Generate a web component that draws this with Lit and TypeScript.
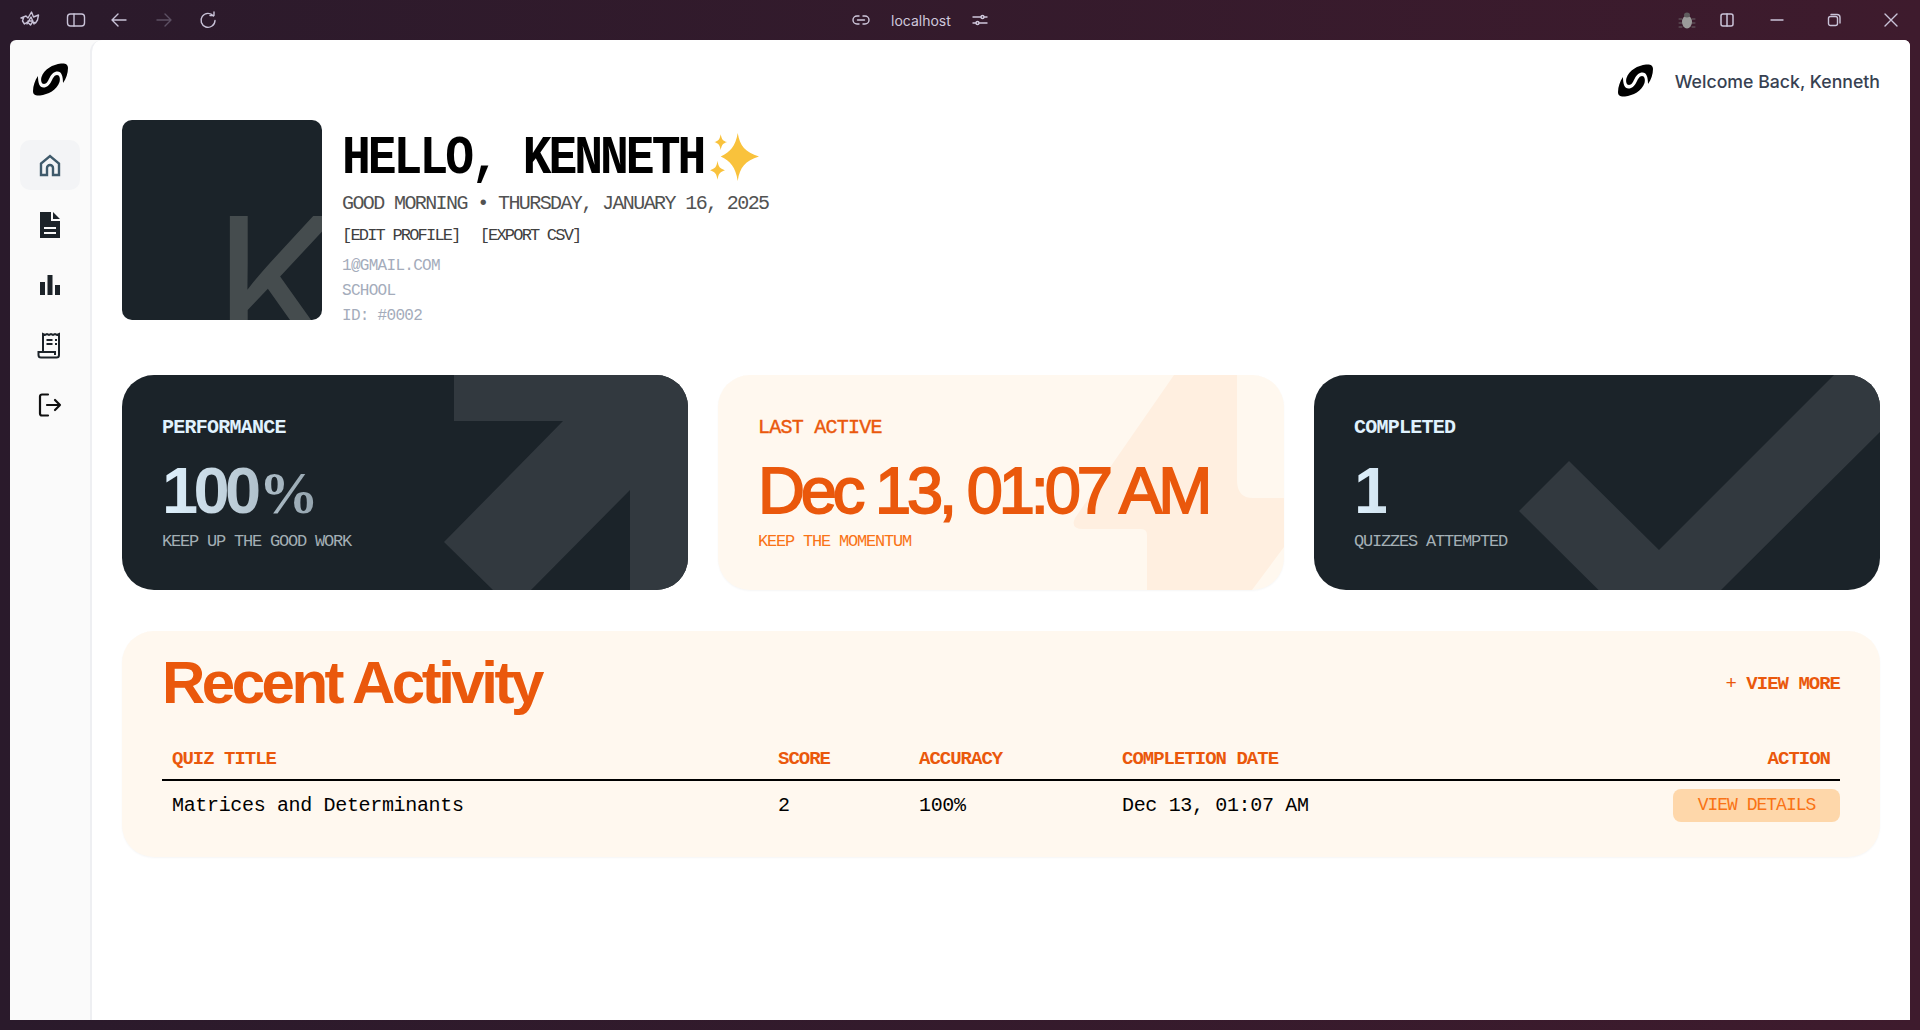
import { LitElement, html, css, svg } from 'lit';
import { customElement } from 'lit/decorators.js';

const hook = 'M30 20C33 16 35 10 35 5C35 1 32 0 28 .5C20 1.500 11 6 8.500 14C7.500 17.500 8.500 21 11 21C13.500 21 15 18 16.500 15C18.500 11 21 8.500 24.500 8.500C28.500 8.500 30 13 30 20Z';

const logo = html`<svg class="logo" viewBox="0 0 35 33">
  <path d=${hook}/>
  <path d=${hook} transform="rotate(180 17.500 16.500)"/>
</svg>`;

const arrowShape = svg`<polygon points="332,0 566,0 566,215 508,215 508,115 409,215 371,215 322,167 441,46 332,46"/>`;
const checkShape = svg`<polygon points="520,0 566,0 566,57 407,215 284.500,215 205,136 255,86 345,175"/>`;
const boltShape = svg`<path d="M456 0H519V105Q519 123 535 123H566V172L534 215H429V160Q429 154 423 154H365Q352 154 357 143Z"/>`;

@customElement('stat-card')
class StatCard extends LitElement {
  static properties = {
    label: { type: String },
    value: { type: String },
    note: { type: String },
    tone: { type: String },
  };

  label = '';
  value = '';
  note = '';
  tone = 'dark';

  static styles = css`
    :host {
      display: block;
    }
    .card {
      position: relative;
      height: 215px;
      box-sizing: border-box;
      padding: 41px 40px 0;
      border-radius: 32px;
      overflow: hidden;
      font-family: 'Liberation Mono', monospace;
    }
    .dark {
      background: #1b2329;
    }
    .light {
      background: #fff8ef;
      box-shadow: 0 1px 2px rgba(0, 0, 0, 0.04);
    }
    .shape {
      position: absolute;
      left: 0;
      top: 0;
      width: 100%;
      height: 100%;
    }
    .dark .shape {
      fill: #32393f;
    }
    .light .shape {
      fill: #ffefe0;
    }
    .label,
    .value,
    .note {
      position: relative;
    }
    .label {
      font-size: 20px;
      line-height: 24px;
      font-weight: 700;
      letter-spacing: -0.75px;
    }
    .dark .label {
      color: #e0f2fe;
    }
    .light .label {
      color: #ea580c;
      font-weight: 400;
      -webkit-text-stroke: 0.4px #ea580c;
    }
    .value {
      margin-top: 15px;
      font-family: 'Liberation Sans', sans-serif;
      font-size: 65px;
      line-height: 72px;
      letter-spacing: -4.6px;
      white-space: nowrap;
      width: fit-content;
    }
    .dark .value {
      font-weight: 700;
      background: linear-gradient(90deg, #e0f2fe, #94a3ad) no-repeat 0 0 / 155px 100%;
      -webkit-background-clip: text;
      background-clip: text;
      color: transparent;
    }
    .light .value {
      color: #ea580c;
      letter-spacing: -4.15px;
      -webkit-text-stroke: 1.8px #ea580c;
    }
    .pct {
      font-family: 'Liberation Serif', serif;
      font-size: 60px;
      line-height: 0;
      letter-spacing: 0;
      margin-left: 2px;
    }
    .note {
      margin-top: 5px;
      font-size: 17px;
      line-height: 20px;
      letter-spacing: -1.2px;
    }
    .dark .note {
      color: #a3afb5;
    }
    .light .note {
      color: #f97316;
    }
  `;

  render() {
    const shape = this.tone === 'light' ? boltShape : this.label === 'COMPLETED' ? checkShape : arrowShape;
    const parts = this.value.endsWith('%') ? [this.value.slice(0, -1), '%'] : [this.value, ''];
    return html`
      <div class="card ${this.tone}">
        <svg class="shape" viewBox="0 0 566 215">${shape}</svg>
        <div class="label">${this.label}</div>
        <div class="value">${parts[0]}${parts[1] ? html`<span class="pct">${parts[1]}</span>` : ''}</div>
        <div class="note">${this.note}</div>
      </div>
    `;
  }
}

@customElement('app-root')
class AppRoot extends LitElement {
  static styles = css`
    :host {
      display: block;
      width: 1920px;
      height: 1030px;
      overflow: hidden;
      background: linear-gradient(90deg, #2a1a2b, #3e1b2d);
      font-family: 'Inter', sans-serif;
    }
    /* browser chrome */
    .chrome {
      display: flex;
      align-items: center;
      height: 40px;
      color: #c9c3d8;
    }
    .chrome svg {
      fill: none;
      stroke: currentColor;
      stroke-width: 1.4;
      stroke-linecap: round;
      stroke-linejoin: round;
      flex: none;
    }
    .left {
      width: 852px;
      flex: none;
      box-sizing: border-box;
      display: flex;
      align-items: center;
      padding-left: 19px;
      gap: 25px;
    }
    .left .dim {
      color: #5c5063;
    }
    .left .back {
      margin-left: -2px;
    }
    .right {
      flex: 1;
      display: flex;
      align-items: center;
      justify-content: flex-end;
      padding-right: 22px;
    }
    .url {
      display: flex;
      align-items: center;
      gap: 21px;
      font-size: 14px;
      color: #cfc8dc;
    }
    .chrome .bug {
      margin-right: 24px;
      stroke: #777;
      stroke-width: 0.8;
    }
    .split {
      margin-right: 36px;
    }
    .min,
    .max {
      margin-right: 43px;
    }
    /* window */
    .window {
      display: flex;
      height: 980px;
      margin: 0 10px;
      background: #fafafa;
      border-radius: 6px 6px 0 0;
      overflow: hidden;
    }
    .side {
      width: 80px;
      flex: none;
      display: flex;
      flex-direction: column;
      align-items: center;
      box-sizing: border-box;
      padding-top: 23px;
    }
    .logo {
      width: 35px;
      height: 33px;
      fill: #000;
      display: block;
      flex: none;
    }
    .nav {
      display: flex;
      flex-direction: column;
      gap: 10px;
      margin-top: 44px;
    }
    .nav a {
      width: 60px;
      height: 50px;
      display: flex;
      align-items: center;
      justify-content: center;
      border-radius: 10px;
    }
    .nav a.active {
      background: #f3f4f6;
    }
    .main {
      flex: 1;
      background: #fff;
      border-left: 2px solid #eeeff2;
      border-top-left-radius: 12px;
      padding: 0 30px;
      box-sizing: border-box;
      min-width: 0;
    }
    .top {
      height: 80px;
      display: flex;
      align-items: center;
      justify-content: flex-end;
      gap: 22px;
      font-size: 17.7px;
      font-weight: 500;
      color: #374151;
    }
    .top span {
      position: relative;
      top: 1px;
    }
    .hero {
      display: flex;
      gap: 20px;
      height: 255px;
    }
    .avatar {
      width: 200px;
      height: 200px;
      flex: none;
      position: relative;
      overflow: hidden;
      background: #1b2329;
      border-radius: 10px;
    }
    .avatar span {
      position: absolute;
      left: 91px;
      bottom: -62px;
      font-size: 192px;
      line-height: 1;
      font-weight: 400;
      color: #454c4e;
    }
    .intro {
      font-family: 'Liberation Mono', monospace;
    }
    .hello {
      display: flex;
      align-items: center;
      height: 60px;
      margin-top: 7px;
      font-size: 48px;
      font-weight: 700;
      letter-spacing: -3px;
      color: #000;
    }
    .hello span {
      transform: translateY(2px) scaleY(1.1);
    }
    .hello svg {
      width: 50px;
      height: 50px;
      margin-left: 6px;
      fill: #f9c23c;
    }
    .date {
      margin-top: 5px;
      font-size: 20px;
      line-height: 24px;
      letter-spacing: -1.6px;
      color: #525252;
    }
    .links {
      display: flex;
      gap: 20px;
      margin-top: 10px;
      font-size: 17px;
      line-height: 20px;
      letter-spacing: -1.8px;
      color: #404040;
    }
    .meta {
      margin-top: 8px;
      font-size: 16px;
      line-height: 25px;
      letter-spacing: -0.7px;
      color: #a4acbb;
    }
    .cards {
      display: grid;
      grid-template-columns: repeat(3, 1fr);
      gap: 30px;
    }
    /* recent activity */
    .recent {
      margin-top: 41px;
      height: 226px;
      box-sizing: border-box;
      padding: 20px 40px 0;
      background: #fff8ef;
      border-radius: 32px;
      box-shadow: 0 1px 2px rgba(0, 0, 0, 0.04);
      font-family: 'Liberation Mono', monospace;
    }
    .recent-head {
      display: flex;
      align-items: center;
      justify-content: space-between;
      height: 64px;
    }
    h2 {
      margin: 0;
      font-family: 'Liberation Sans', sans-serif;
      font-size: 60px;
      line-height: 64px;
      font-weight: 700;
      letter-spacing: -3.5px;
      color: #ea580c;
    }
    .more {
      margin-top: 2px;
      font-size: 19px;
      font-weight: 700;
      letter-spacing: -1px;
      color: #ea580c;
    }
    .more i {
      font-style: normal;
      font-weight: 400;
    }
    .row {
      display: grid;
      grid-template-columns: 606px 141px 203px 1fr auto;
      align-items: center;
    }
    .row > div {
      padding-left: 10px;
    }
    .head {
      margin-top: 24px;
      height: 42px;
      box-sizing: border-box;
      border-bottom: 2px solid #000;
      font-size: 19px;
      font-weight: 700;
      letter-spacing: -1px;
      color: #ea580c;
    }
    .head .action {
      padding-right: 10px;
    }
    .body {
      height: 48px;
      font-size: 20px;
      letter-spacing: -0.34px;
      color: #000;
    }
    .body > div:last-child {
      padding: 0;
    }
    button {
      display: block;
      width: 167px;
      height: 33px;
      padding: 0;
      border: none;
      border-radius: 8px;
      background: #fed7aa;
      color: #f97316;
      font-family: 'Liberation Mono', monospace;
      font-size: 18px;
      letter-spacing: -1px;
    }
  `;

  renderChrome() {
    return html`
      <div class="chrome">
        <div class="left">
          <svg width="22" height="20" viewBox="0 0 20 20"><path d="M1 8 6 6l2 2 3.500-6 2 5 5-2-1 5-2 3-3-1-2 3-3-3-3 2-2-3 1-3zM7 14l4-7 3 7M8 11h5"/></svg>
          <svg width="20" height="16" viewBox="0 0 20 16"><rect x="1.500" y="2" width="17" height="12" rx="3"/><path d="M8 2v12"/></svg>
          <svg class="back" width="20" height="16" viewBox="0 0 20 16"><path d="M17 8H3M9 2 3 8l6 6"/></svg>
          <svg class="dim" width="20" height="16" viewBox="0 0 20 16"><path d="M3 8h14M11 2l6 6-6 6"/></svg>
          <svg width="18" height="18" viewBox="0 0 18 18"><path d="M14.500 5A7 7 0 1 0 16 9.500M11 4.500h4v-3.500"/></svg>
        </div>
        <div class="url">
          <svg width="18" height="12" viewBox="0 0 18 12"><path d="M7 2H5a4 4 0 0 0 0 8h2M11 2h2a4 4 0 0 1 0 8h-2M5.500 6h7"/></svg>
          <span>localhost</span>
          <svg width="16" height="14" viewBox="0 0 16 14"><path d="M1 4h8M12 4h3M1 10h3M7 10h8"/><circle cx="10.500" cy="4" r="1.500"/><circle cx="5.500" cy="10" r="1.500"/></svg>
        </div>
        <div class="right">
          <svg class="bug" width="18" height="18" viewBox="0 0 18 18"><path d="M1 8h3M14 8h3M1 12h3M14 12h3M1 16h3M14 16h3"/><ellipse cx="9" cy="11" rx="5" ry="6.500" fill="#9b9a9a" stroke="none"/><ellipse cx="9" cy="4" rx="3" ry="2.500" fill="#5f5c5e" stroke="none"/></svg>
          <svg class="split" width="14" height="14" viewBox="0 0 14 14"><rect x="1" y="1" width="12" height="12" rx="2" stroke-width="1.500"/><path d="M7 1v12" stroke-width="1.500"/></svg>
          <svg class="min" width="14" height="14" viewBox="0 0 14 14"><path d="M1 7h12"/></svg>
          <svg class="max" width="14" height="14" viewBox="0 0 14 14"><rect x="1.500" y="3.500" width="9" height="9" rx="2"/><path d="M4 1.500h6a3 3 0 0 1 3 3V10"/></svg>
          <svg width="14" height="14" viewBox="0 0 14 14"><path d="M1 1l12 12M13 1 1 13"/></svg>
        </div>
      </div>
    `;
  }

  renderSide() {
    return html`
      <div class="side">
        ${logo}
        <div class="nav">
          <a class="active">
            <svg width="24" height="24" viewBox="0 0 24 24" fill="none" stroke="#3f5a6b" stroke-width="2.400"><path d="M3 22V10.500L12 3l9 7.500V22h-6v-7a3 3 0 0 0-6 0v7z"/></svg>
          </a>
          <a>
            <svg width="24" height="28" viewBox="0 0 24 28" fill="#1c2329"><path d="M2 1h11v9h9v17H2zM15 1l7 7h-7z"/><path d="M6 16h12v2H6zM6 21h12v2H6z" fill="#fafafa"/></svg>
          </a>
          <a>
            <svg width="24" height="24" viewBox="0 0 24 24" fill="#1c2329"><path d="M2 9h5v13H2zM9.500 2h5v20h-5zM17 12h5v10h-5z"/></svg>
          </a>
          <a>
            <svg width="26" height="28" viewBox="0 0 26 28" fill="none" stroke="#1c2329" stroke-width="2"><path d="M6 21V3l2 1 2-1 2 1 2-1 2 1 2-1 2 1 2-1v21a2.500 2.500 0 0 1-2.500 2.500H4A2.500 2.500 0 0 1 1.500 24v-3H18v3"/><path d="M9.500 9h6M9.500 13h6M18 9h2M18 13h2" stroke-width="2"/></svg>
          </a>
          <a>
            <svg width="24" height="24" viewBox="0 0 24 24" fill="none" stroke="#111" stroke-width="2.200" stroke-linecap="round" stroke-linejoin="round"><path d="M10 1.500H4A2 2 0 0 0 2 3.500v17a2 2 0 0 0 2 2h6M9 12h13M17 7l5 5-5 5"/></svg>
          </a>
        </div>
      </div>
    `;
  }

  render() {
    return html`
      ${this.renderChrome()}
      <div class="window">
        ${this.renderSide()}
        <div class="main">
          <div class="top">${logo}<span>Welcome Back, Kenneth</span></div>
          <div class="hero">
            <div class="avatar"><span>K</span></div>
            <div class="intro">
              <div class="hello">
                <span>HELLO, KENNETH</span>
                <svg viewBox="1 2 47 47"><path d="M28 3C30 15 35 21 48 25C35 29 30 35 28 48C26 35 21 29 12 25C21 21 26 15 28 3Z"/><path d="M12 4C13 9 14 10 18 11.500C14 13 13 14 12 19C11 14 10 13 6 11.500C10 10 11 9 12 4Z"/><path d="M9 29C10 35 11 36 16 38C11 40 10 41 9 47C8 41 7 40 2 38C7 36 8 35 9 29Z"/></svg>
              </div>
              <div class="date">GOOD MORNING • THURSDAY, JANUARY 16, 2025</div>
              <div class="links"><span>[EDIT PROFILE]</span><span>[EXPORT CSV]</span></div>
              <div class="meta">
                <div>1@GMAIL.COM</div>
                <div>SCHOOL</div>
                <div>ID: #0002</div>
              </div>
            </div>
          </div>
          <div class="cards">
            <stat-card label="PERFORMANCE" value="100%" note="KEEP UP THE GOOD WORK" tone="dark"></stat-card>
            <stat-card label="LAST ACTIVE" value="Dec 13, 01:07 AM" note="KEEP THE MOMENTUM" tone="light"></stat-card>
            <stat-card label="COMPLETED" value="1" note="QUIZZES ATTEMPTED" tone="dark"></stat-card>
          </div>
          <div class="recent">
            <div class="recent-head">
              <h2>Recent Activity</h2>
              <span class="more"><i>+</i> VIEW MORE</span>
            </div>
            <div class="row head">
              <div>QUIZ TITLE</div>
              <div>SCORE</div>
              <div>ACCURACY</div>
              <div>COMPLETION DATE</div>
              <div class="action">ACTION</div>
            </div>
            <div class="row body">
              <div>Matrices and Determinants</div>
              <div>2</div>
              <div>100%</div>
              <div>Dec 13, 01:07 AM</div>
              <div><button>VIEW DETAILS</button></div>
            </div>
          </div>
        </div>
      </div>
    `;
  }
}
